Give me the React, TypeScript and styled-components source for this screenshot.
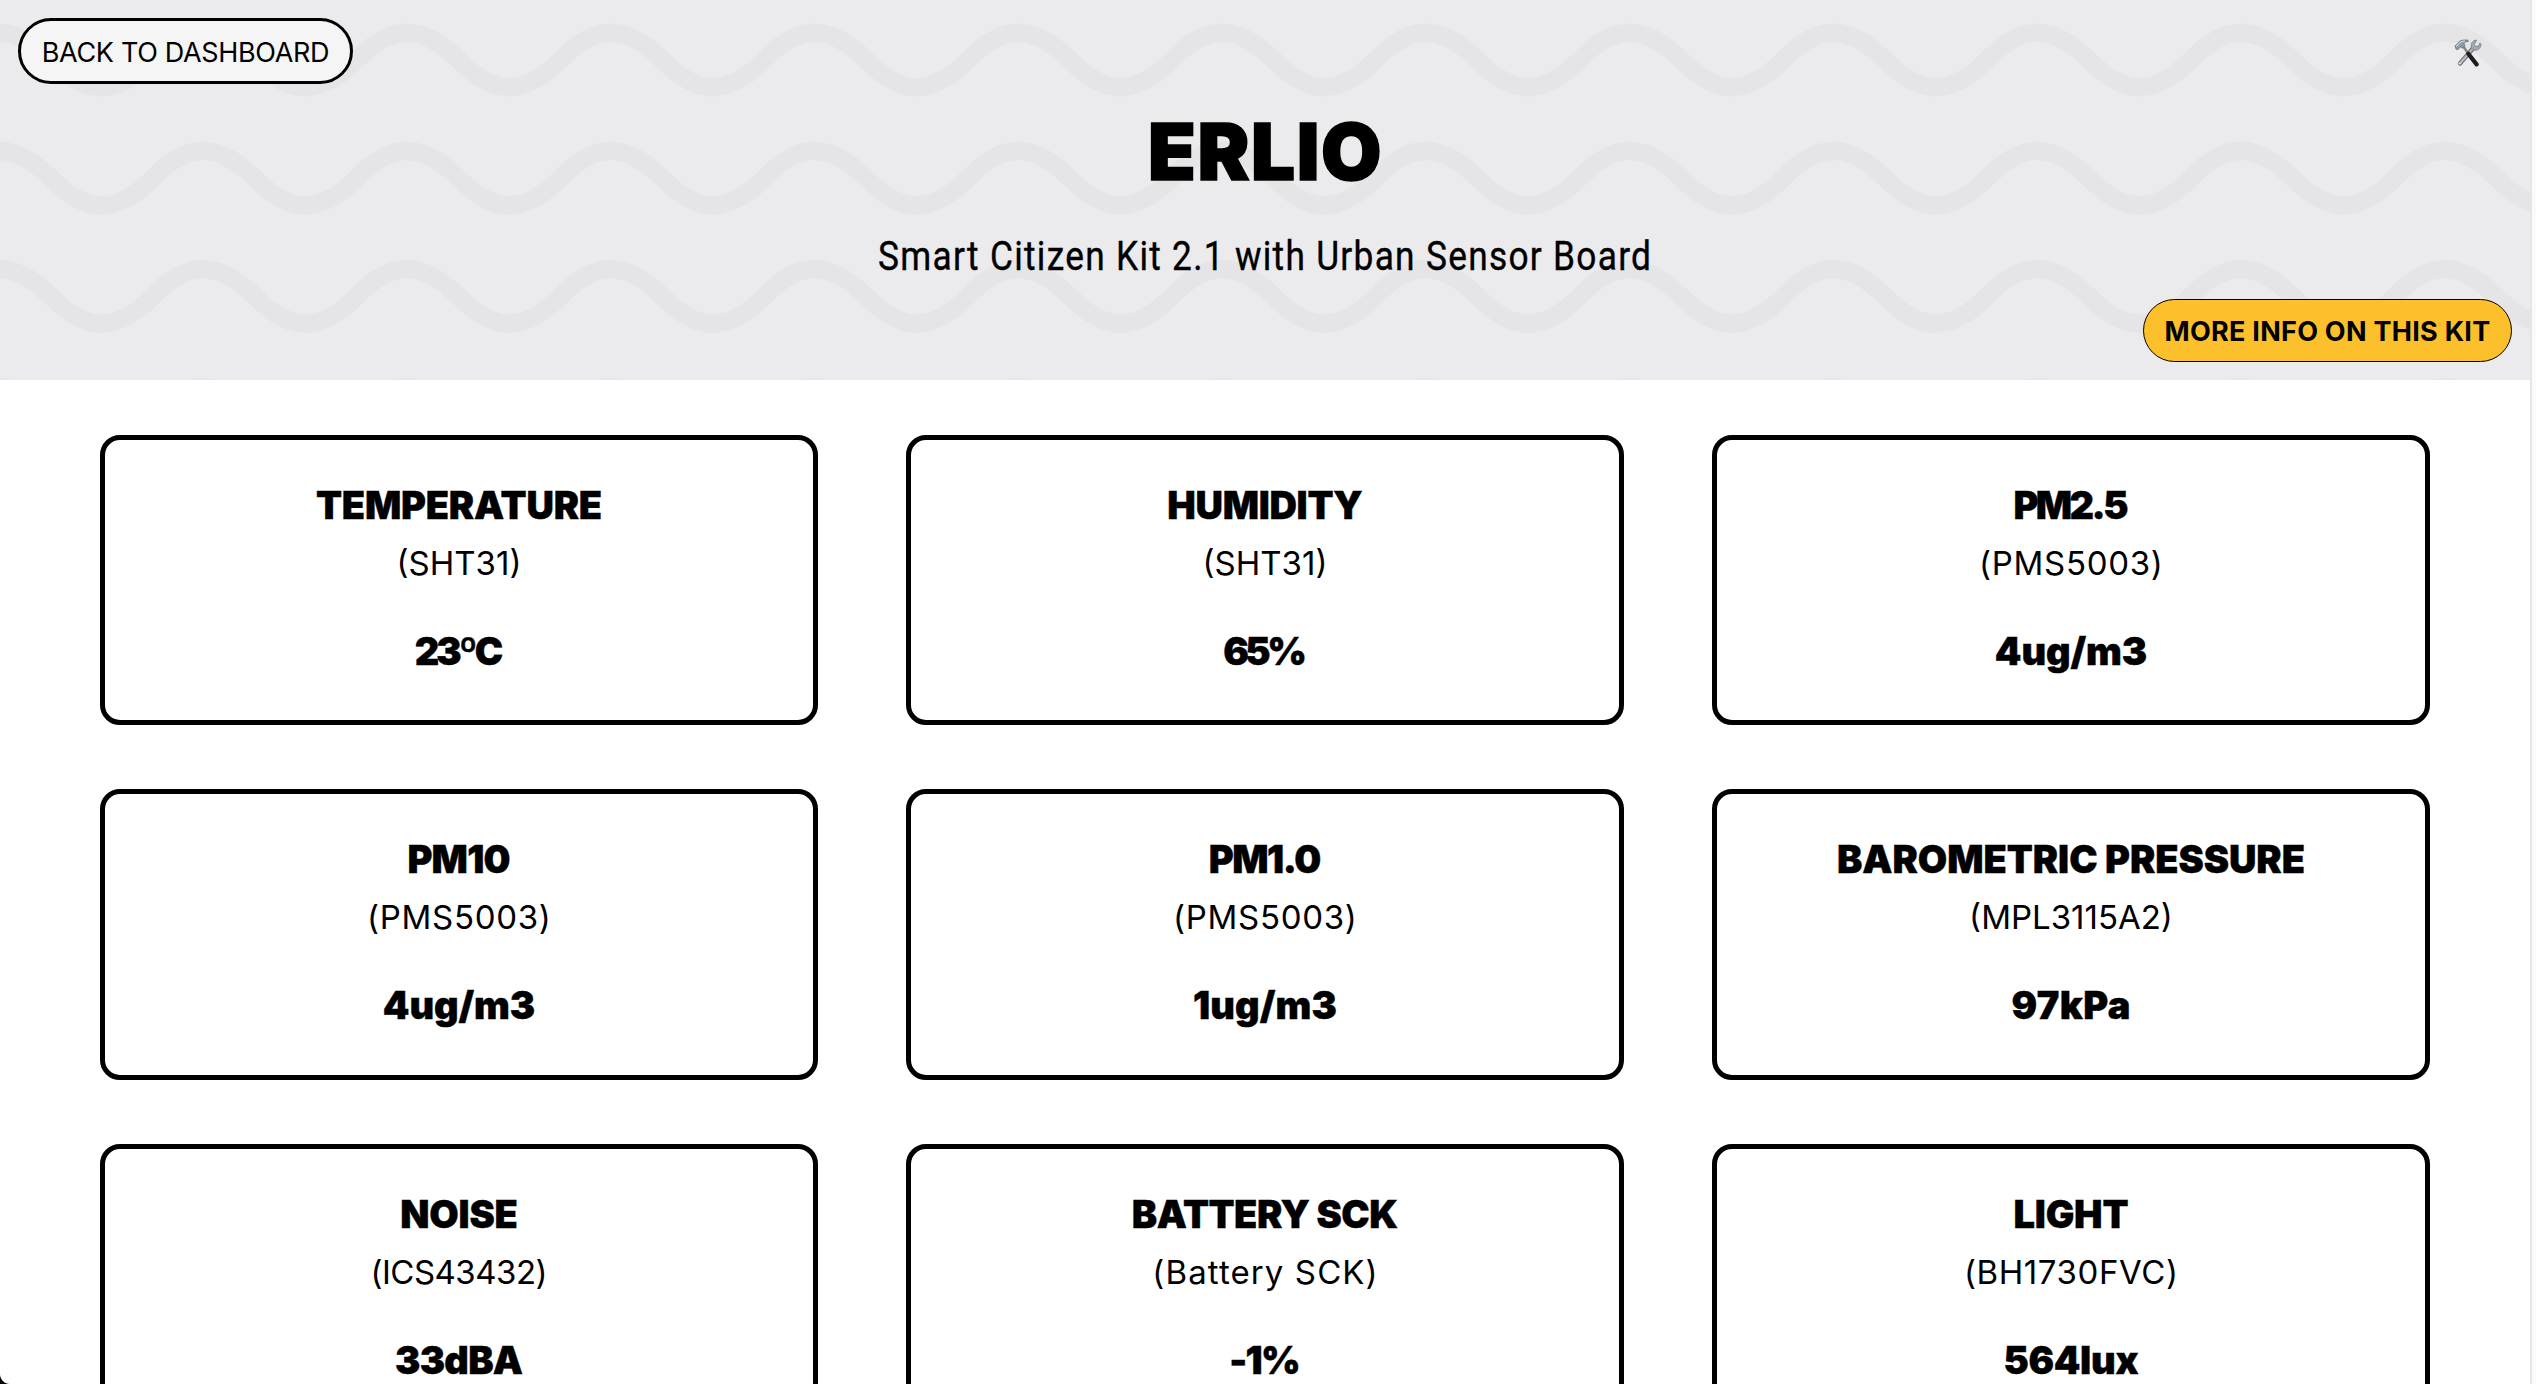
import React, { useId } from 'react';
import styled, { createGlobalStyle, css } from 'styled-components';

const GlobalStyle = createGlobalStyle`
  *, *::before, *::after { box-sizing: border-box; }
  html, body { margin: 0; background: #fff; color: #000; }
  body { font-family: Inter, 'Liberation Sans', sans-serif; overflow: hidden; }
`;

const Page = styled.div`
  position: relative;
  display: flex;
  height: 1384px;
  overflow: hidden;
  background: #fff;
`;

const Content = styled.div`
  flex: 1;
  min-width: 0;
`;

const ScrollTrack = styled.div`
  width: 6px;
  background: #fafafa;
  border-left: 2px solid #e6e6e6;
`;

const Header = styled.header`
  position: relative;
  display: flex;
  flex-direction: column;
  height: 380px;
  padding: 18px;
  background: #ebebed;
`;

const Waves = styled.svg`
  position: absolute;
  inset: 0;
  width: 100%;
  height: 100%;
`;

const HeaderRow = styled.div<{ $end?: boolean }>`
  position: relative;
  display: flex;
  justify-content: ${(p) => (p.$end ? 'flex-end' : 'space-between')};
`;

const Headline = styled.div`
  position: relative;
  flex: 1;
  display: flex;
  flex-direction: column;
  align-items: center;
`;

const Button = styled.button<{ $primary?: boolean }>`
  display: flex;
  align-items: center;
  justify-content: center;
  width: ${(p) => (p.$primary ? 369 : 335)}px;
  height: ${(p) => (p.$primary ? 63 : 66)}px;
  padding: 2px 0 0;
  border: ${(p) => (p.$primary ? 1 : 3)}px solid #000;
  border-radius: 33px;
  background: ${(p) => (p.$primary ? '#fcc02d' : '#f5f5f5')};
  color: #000;
  font: ${(p) => (p.$primary ? 700 : 400)} 27px/1 Inter, 'Liberation Sans', sans-serif;
  letter-spacing: ${(p) => (p.$primary ? 0.27 : -0.33)}px;
  white-space: nowrap;
`;

const ToolButton = styled.button`
  display: flex;
  margin: 21px 30px 0 0;
  padding: 0;
  height: 28px;
  border: 0;
  background: none;
`;

const Title = styled.h1`
  margin: 20px -1.2px 0 0;
  font-weight: 900;
  font-size: 78px;
  line-height: 96px;
  letter-spacing: 1.6px;
  -webkit-text-stroke: 1.6px #000;
`;

const Subtitle = styled.p`
  margin: 32px 0 0;
  font: 400 41px/48px Roboto, 'Liberation Sans', sans-serif;
  letter-spacing: 1.5px;
  -webkit-text-stroke: 0.4px #000;
  transform: scaleX(0.86);
  white-space: nowrap;
`;

const Grid = styled.main`
  display: grid;
  grid-template-columns: repeat(3, 718px);
  grid-auto-rows: 290.5px;
  gap: 64px 88px;
  padding: 54.8px 100px 0;
`;

const Card = styled.section`
  display: flex;
  flex-direction: column;
  align-items: center;
  padding-top: 42px;
  border: 5px solid #000;
  border-radius: 20px;
`;

/* The negative margin cancels the space added after the last letter. */
const tracking = css<{ $track: number }>`
  letter-spacing: ${(p) => p.$track}px;
  margin-right: ${(p) => -p.$track}px;
  line-height: 46px;
  white-space: nowrap;
`;

const heavy = css`
  font-weight: 900;
  font-size: 38px;
  -webkit-text-stroke: 0.4px #000;
`;

const CardTitle = styled.h2<{ $track: number }>`
  margin: 0;
  ${heavy}
  ${tracking}
`;

const Device = styled.span<{ $track: number }>`
  margin-top: 12px;
  font-size: 33px;
  ${tracking}
`;

const Reading = styled.strong<{ $track: number }>`
  margin-top: 42px;
  ${heavy}
  ${tracking}
`;

const Corner = styled.div`
  position: absolute;
  left: 0;
  bottom: 0;
  width: 10px;
  height: 10px;
  background: radial-gradient(circle at 100% 0, transparent 9.5px, #000 10.5px);
`;

type Sensor = {
  name: string;
  device: string;
  value: string;
  /* letter spacing of the name, the device and the value */
  track: [number, number, number];
};

const sensors: Sensor[] = [
  { name: 'TEMPERATURE', device: '(SHT31)', value: '23ºC', track: [-0.2, 0, -3.1] },
  { name: 'HUMIDITY', device: '(SHT31)', value: '65%', track: [-0.3, 0, -3.5] },
  { name: 'PM2.5', device: '(PMS5003)', value: '4ug/m3', track: [-2.6, 0.7, -0.1] },
  { name: 'PM10', device: '(PMS5003)', value: '4ug/m3', track: [-0.8, 0.7, -0.1] },
  { name: 'PM1.0', device: '(PMS5003)', value: '1ug/m3', track: [-1.5, 0.7, 0.1] },
  { name: 'BAROMETRIC PRESSURE', device: '(MPL3115A2)', value: '97kPa', track: [-0.05, 0, 0.4] },
  { name: 'NOISE', device: '(ICS43432)', value: '33dBA', track: [-0.2, -0.5, -0.7] },
  { name: 'BATTERY SCK', device: '(Battery SCK)', value: '-1%', track: [-0.5, 1.1, -1.7] },
  { name: 'LIGHT', device: '(BH1730FVC)', value: '564lux', track: [-0.2, 0.6, -0.3] },
];

function WavePattern() {
  const id = useId();
  const wave =
    'M-50.95 27.5C-36.6 12.3-19.5.15 0 0c21.3 1.85 36.65 13.5 50.95 27.5C65.5 42.3 82.6 54.7 101.9 55c21.3-1.7 37.5-13.6 50.95-27.5C167.2 12.3 184.3.15 203.8 0c21.3 1.85 36.65 13.5 50.95 27.5';
  return (
    <Waves aria-hidden="true">
      <defs>
        <pattern id={id} width="203.8" height="118.2" y="0" patternUnits="userSpaceOnUse">
          <path d={wave} transform="translate(0 32.5)" fill="none" stroke="#e5e5e7" strokeWidth="18.3" />
        </pattern>
      </defs>
      <rect width="100%" height="100%" fill={`url(#${id})`} />
    </Waves>
  );
}

function ToolsIcon() {
  return (
    <svg width="28" height="28" viewBox="0 0 28 28" fill="none">
      {/* wrench */}
      <path d="M6 24.5 18.5 10" stroke="#77757c" strokeWidth="4.4" strokeLinecap="round" />
      <path d="M6.4 24 18.6 9.8" stroke="#b9b9c2" strokeWidth="2" strokeLinecap="round" />
      <circle cx="5.6" cy="24.6" r="1" fill="#f2f2f4" />
      <path
        d="M22.5 1C18.6 1.5 16.6 4.4 17.3 8c.3 2 2.2 3.4 4.5 3.2 2.9-.2 5-2.4 5.2-5.6L26 3.9l-1.5 3.2-2.8.5-1.5-2z"
        fill="#a5abb3"
        stroke="#747a82"
        strokeWidth=".8"
      />
      {/* hammer */}
      <path d="m9 7 5.5 8" stroke="#8b877f" strokeWidth="2.6" />
      <path d="m14.3 14.7 8.3 10.7" stroke="#1d1d20" strokeWidth="4.2" strokeLinecap="round" />
      <path
        d="M1 6.8 3 5.4C4.5 2 8 .4 14 1.2l.3 1.2c-2.6.1-4 .8-4.4 2.5L11 6.6 8.3 9.2 6.4 7.8 4.2 10.5 2 10.2z"
        fill="#929aa3"
        stroke="#686e76"
        strokeWidth=".8"
      />
      <path d="M2 7.3 4 6c1.6-2.8 4-3.9 7-4" stroke="#e3e8ed" strokeWidth="1" />
    </svg>
  );
}

export default function App() {
  return (
    <Page>
      <GlobalStyle />
      <Content>
        <Header>
          <WavePattern />
          <HeaderRow>
            <Button>BACK TO DASHBOARD</Button>
            <ToolButton aria-label="Settings">
              <ToolsIcon />
            </ToolButton>
          </HeaderRow>
          <Headline>
            <Title>ERLIO</Title>
            <Subtitle>Smart Citizen Kit 2.1 with Urban Sensor Board</Subtitle>
          </Headline>
          <HeaderRow $end>
            <Button $primary>MORE INFO ON THIS KIT</Button>
          </HeaderRow>
        </Header>
        <Grid>
          {sensors.map((s) => (
            <Card key={s.name}>
              <CardTitle $track={s.track[0]}>{s.name}</CardTitle>
              <Device $track={s.track[1]}>{s.device}</Device>
              <Reading $track={s.track[2]}>{s.value}</Reading>
            </Card>
          ))}
        </Grid>
      </Content>
      <ScrollTrack />
      <Corner />
    </Page>
  );
}
